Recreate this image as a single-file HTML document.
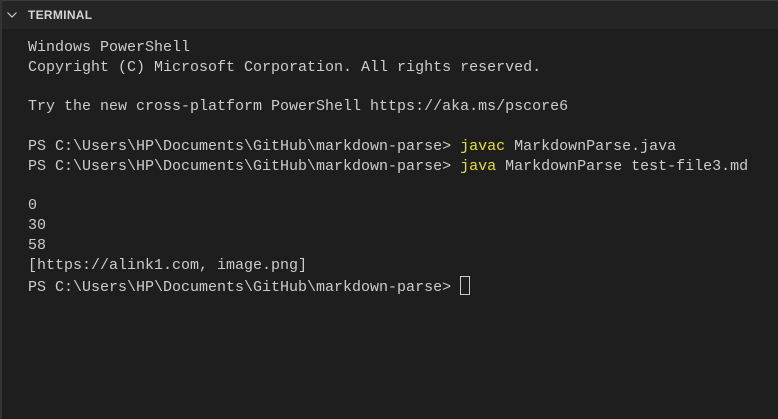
<!DOCTYPE html>
<html><head><style>
html,body{margin:0;padding:0;width:778px;height:419px;background:#1e1e1e;overflow:hidden}
.hdr{position:absolute;left:0;top:0;width:778px;height:29px;background:#252526;border-top:1px solid #3c3c3c;box-sizing:border-box}
.hdr span{position:absolute;left:28px;top:7px;font:bold 12px "Liberation Sans",sans-serif;color:#d4d4d4;letter-spacing:0.3px}
.side{position:absolute;left:0;top:0;width:2px;height:419px;background:#333}
pre{position:absolute;left:28px;top:38px;margin:0;font:15px/19.8px "Liberation Mono",monospace;color:#cccccc}
.y{color:#e5e510}
.cur{display:inline-block;width:8px;height:17px;border:1px solid #cccccc;vertical-align:-4px}
</style></head><body>
<div class="hdr"><svg style="position:absolute;left:6px;top:9px" width="12" height="10"><path d="M1.5 2.5 L6 7 L10.5 2.5" stroke="#cccccc" stroke-width="1.2" fill="none"/></svg><span>TERMINAL</span></div>
<div class="side"></div>
<pre>Windows PowerShell
Copyright (C) Microsoft Corporation. All rights reserved.

Try the new cross-platform PowerShell https://aka.ms/pscore6

PS C:\Users\HP\Documents\GitHub\markdown-parse&gt; <span class="y">javac</span> MarkdownParse.java
PS C:\Users\HP\Documents\GitHub\markdown-parse&gt; <span class="y">java</span> MarkdownParse test-file3.md

0
30
58
[https://alink1.com, image.png]
PS C:\Users\HP\Documents\GitHub\markdown-parse&gt; <span class="cur"></span></pre>
</body></html>
